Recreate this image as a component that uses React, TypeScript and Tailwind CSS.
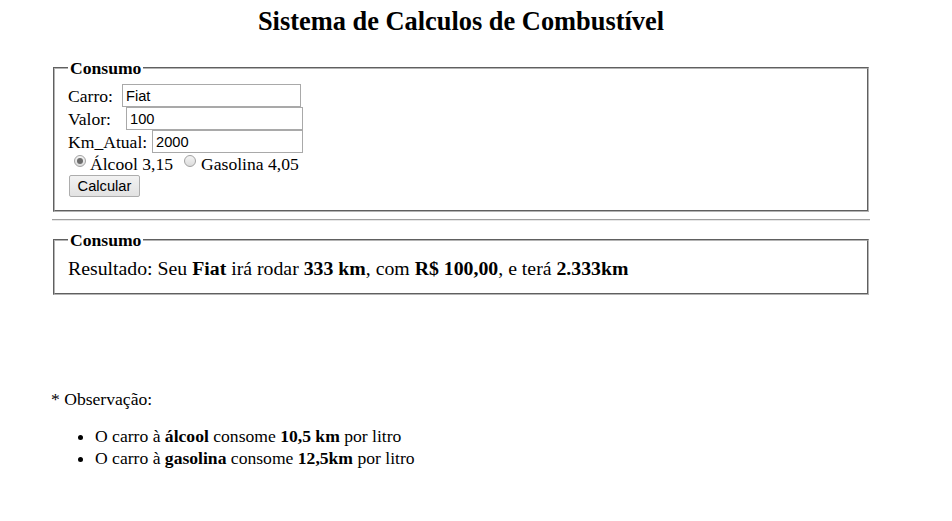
import React from "react";

function Radio({ checked }: { checked?: boolean }) {
  return (
    <span className="relative inline-flex items-center justify-center self-start mt-[2px] w-[12px] h-[12px] rounded-full border border-[#a2a2a2] bg-gradient-to-b from-[#f4f4f4] to-[#dcdcdc] shrink-0">
      {checked && <span className="w-[6px] h-[6px] rounded-full bg-[#6b6b6b]" />}
    </span>
  );
}

export default function App() {
  const inputCls =
    "h-[23px] border border-[#a9a9a9] bg-white px-[3px] font-['Liberation_Sans',Arial,sans-serif] text-[14.67px] text-black leading-[19px] outline-none";
  return (
    <div className="min-h-screen bg-white text-black font-['Liberation_Serif','Times_New_Roman',serif] text-[17.6px] leading-[20px]">
      <div className="ml-[51px] w-[820px] pt-[6px]">
        <h2 className="text-center font-bold text-[26.4px] leading-[30px]">
          Sistema de Calculos de Combustível
        </h2>

        <fieldset className="mt-[22px] mx-[2px] border-2 [border-style:groove] border-[#b4b4b4] px-[13px] pt-[6px] pb-[13px]">
          <legend className="px-[2px] font-bold leading-[20px]">Consumo</legend>
          <div className="flex items-center h-[23px]">
            <span className="w-[54px] shrink-0">Carro:</span>
            <input className={inputCls + " w-[179px]"} defaultValue="Fiat" />
          </div>
          <div className="flex items-center h-[23px]">
            <span className="w-[58px] shrink-0">Valor:</span>
            <input className={inputCls + " w-[177px]"} defaultValue="100" />
          </div>
          <div className="flex items-center h-[23px]">
            <span className="w-[84px] shrink-0">Km_Atual:</span>
            <input className={inputCls + " w-[151px]"} defaultValue="2000" />
          </div>
          <div className="flex items-center h-[22px]">
            <span className="ml-[6px] flex self-stretch">
              <Radio checked />
            </span>
            <span className="ml-[4px]">Álcool 3,15</span>
            <span className="ml-[11px] flex self-stretch">
              <Radio />
            </span>
            <span className="ml-[5px]">Gasolina 4,05</span>
          </div>
          <div className="flex items-center h-[22px]">
            <button className="ml-[1px] h-[22px] w-[71px] rounded-[2px] border border-[#adadad] bg-gradient-to-b from-[#f2f2f2] to-[#e2e2e2] font-['Liberation_Sans',Arial,sans-serif] text-[14.67px] leading-[18px] text-black">
              Calcular
            </button>
          </div>
        </fieldset>

        <hr className="mt-[7px] mb-[9px] mx-px h-0 border-0 border-t border-t-[#a0a0a0] border-b border-b-[#e6e6e6]" />

        <fieldset className="mx-[2px] border-2 [border-style:groove] border-[#b4b4b4] px-[13px] pt-[6px] pb-[13px]">
          <legend className="px-[2px] font-bold leading-[20px]">Consumo</legend>
          <div className="h-[24px] text-[19.8px] leading-[24px] whitespace-nowrap">
            Resultado: Seu <b>Fiat</b> irá rodar <b>333 km</b>, com <b>R$ 100,00</b>, e terá <b>2.333km</b>
          </div>
        </fieldset>

        <div className="mt-[94px] leading-[20px]">* Observação:</div>
        <ul className="mt-[16px] list-disc pl-[44px]">
          <li className="leading-[22px]">
            O carro à <b>álcool</b> consome <b>10,5 km</b> por litro
          </li>
          <li className="leading-[22px]">
            O carro à <b>gasolina</b> consome <b>12,5km</b> por litro
          </li>
        </ul>
      </div>
    </div>
  );
}
